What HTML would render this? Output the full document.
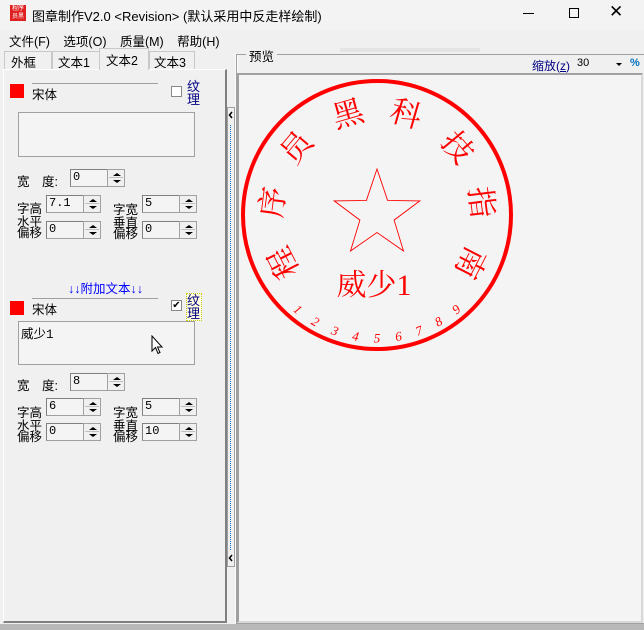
<!DOCTYPE html>
<html><head><meta charset="utf-8"><style>
*{margin:0;padding:0;box-sizing:border-box}
body{width:644px;height:630px;background:#f0f0f0;font-family:"Liberation Sans","Noto Sans CJK SC",sans-serif;font-size:12.5px;color:#000;position:relative;overflow:hidden}
.a{position:absolute}
.sunk{position:absolute;background:#f4f4f4;border:1px solid #a0a0a0;border-top-color:#808080;border-left-color:#808080;font-family:"Liberation Mono","Noto Sans CJK SC",monospace;font-size:12px;padding-left:2px;line-height:15px}
.spin{position:absolute;width:18px;border:1px solid #a0a0a0;background:#f0f0f0}
.spin i{position:absolute;left:5px;width:0;height:0;border-left:4px solid transparent;border-right:4px solid transparent}
.spin .u{top:3px;border-bottom:3px solid #000}
.spin .d{top:10px;border-top:3px solid #000}
.spin b{position:absolute;left:1px;right:1px;top:7px;height:1px;background:#c0c0c0}
.lbl2{position:absolute;font-size:12.5px;line-height:11px}
</style></head><body>
<div class="a" style="left:0;top:0;width:644px;height:30px;background:#f3f3f3"></div>
<div class="a" style="left:10px;top:5px;width:16px;height:16px;background:#e02020;color:#fff;font-size:6px;line-height:8px;text-align:center">程序<br>员黑</div>
<div class="a" style="left:32px;top:6px;font-size:13px">图章制作V2.0 &lt;Revision&gt; (默认采用中反走样绘制)</div>
<div class="a" style="left:523px;top:13px;width:11px;height:1px;background:#000"></div>
<div class="a" style="left:569px;top:8px;width:10px;height:10px;border:1px solid #000"></div>
<div class="a" style="left:609px;top:2px;font-size:17px">✕</div>
<div class="a" style="left:9px;top:31px;font-size:12.5px;word-spacing:10px">文件(F) 选项(O) 质量(M) 帮助(H)</div>
<div class="a" style="left:340px;top:48px;width:140px;height:4px;background:#e4e4e4"></div>
<div class="a" style="left:4px;top:51px;width:48px;height:18px;border:1px solid #c8c8c8;border-bottom:none;padding-left:6px;font-size:12.5px">外框</div>
<div class="a" style="left:52px;top:51px;width:48px;height:18px;border:1px solid #c8c8c8;border-bottom:none;padding-left:5px;font-size:12.5px">文本1</div>
<div class="a" style="left:99px;top:48px;width:50px;height:22px;border:1px solid #c8c8c8;border-bottom:none;background:#f0f0f0;padding-left:6px;padding-top:1px;font-size:12.5px;z-index:2">文本2</div>
<div class="a" style="left:149px;top:51px;width:46px;height:18px;border:1px solid #c8c8c8;border-bottom:none;padding-left:4px;font-size:12.5px">文本3</div>
<div class="a" style="left:3px;top:69px;width:224px;height:554px;border:1px solid #fff;border-right:2px solid #808080;border-bottom:2px solid #808080"></div>

<div class="a" style="left:10px;top:84px;width:14px;height:14px;background:#f00"></div>
<div class="a" style="left:32px;top:83px;width:126px;border-top:1px solid #a0a0a0;font-size:12.5px">宋体</div>
<div class="a" style="left:171px;top:86px;width:11px;height:11px;border:1px solid #888;background:#fff"></div>
<div class="a" style="left:187px;top:80px;color:#000080;font-size:13px;line-height:13px;width:14px">纹理</div>
<div class="a" style="left:18px;top:112px;width:177px;height:45px;border:1px solid #a0a0a0;background:#f4f4f4"></div>
<div class="a" style="left:17px;top:171px">宽　度:</div>
<div class="sunk" style="left:70px;top:169px;width:38px;height:18px">0</div>
<div class="spin" style="left:107px;top:169px;height:18px"><i class="u"></i><b></b><i class="d"></i></div>
<div class="a" style="left:17px;top:198px">字高</div>
<div class="sunk" style="left:46px;top:195px;width:38px;height:18px">7.1</div>
<div class="spin" style="left:83px;top:195px;height:18px"><i class="u"></i><b></b><i class="d"></i></div>
<div class="a" style="left:113px;top:199px">字宽</div>
<div class="sunk" style="left:142px;top:195px;width:38px;height:18px">5</div>
<div class="spin" style="left:179px;top:195px;height:18px"><i class="u"></i><b></b><i class="d"></i></div>
<div class="lbl2" style="left:17px;top:217px">水平<br>偏移</div>
<div class="sunk" style="left:46px;top:221px;width:38px;height:18px">0</div>
<div class="spin" style="left:83px;top:221px;height:18px"><i class="u"></i><b></b><i class="d"></i></div>
<div class="lbl2" style="left:113px;top:218px">垂直<br>偏移</div>
<div class="sunk" style="left:142px;top:221px;width:38px;height:18px">0</div>
<div class="spin" style="left:179px;top:221px;height:18px"><i class="u"></i><b></b><i class="d"></i></div>

<div class="a" style="left:68px;top:278px;color:#0000ff;font-size:12.5px">↓↓附加文本↓↓</div>
<div class="a" style="left:10px;top:301px;width:14px;height:14px;background:#f00"></div>
<div class="a" style="left:32px;top:298px;width:126px;border-top:1px solid #a0a0a0;font-size:12.5px">宋体</div>
<div class="a" style="left:171px;top:300px;width:11px;height:11px;border:1px solid #888;background:#fff;font-size:10px;line-height:9px;text-align:center">✔</div>
<div class="a" style="left:187px;top:294px;color:#000080;font-size:13px;line-height:13px;width:14px;outline:1px dotted #cc0;background:#ffffe0">纹理</div>
<div class="a" style="left:18px;top:321px;width:177px;height:44px;border:1px solid #a0a0a0;background:#f4f4f4;padding:1px 2px;font-family:'Liberation Mono','Noto Sans CJK SC',monospace">威少1</div>
<svg class="a" style="left:151px;top:335px" width="14" height="20"><path d="M1 1 L1 16 L4.5 12.5 L7 18.5 L9 17.5 L6.5 12 L11 12 Z" fill="#fff" stroke="#000"/></svg>
<div class="a" style="left:17px;top:375px">宽　度:</div>
<div class="sunk" style="left:70px;top:373px;width:38px;height:18px">8</div>
<div class="spin" style="left:107px;top:373px;height:18px"><i class="u"></i><b></b><i class="d"></i></div>
<div class="a" style="left:17px;top:402px">字高</div>
<div class="sunk" style="left:46px;top:398px;width:38px;height:18px">6</div>
<div class="spin" style="left:83px;top:398px;height:18px"><i class="u"></i><b></b><i class="d"></i></div>
<div class="a" style="left:113px;top:402px">字宽</div>
<div class="sunk" style="left:142px;top:398px;width:38px;height:18px">5</div>
<div class="spin" style="left:179px;top:398px;height:18px"><i class="u"></i><b></b><i class="d"></i></div>
<div class="lbl2" style="left:17px;top:421px">水平<br>偏移</div>
<div class="sunk" style="left:46px;top:423px;width:38px;height:18px">0</div>
<div class="spin" style="left:83px;top:423px;height:18px"><i class="u"></i><b></b><i class="d"></i></div>
<div class="lbl2" style="left:113px;top:421px">垂直<br>偏移</div>
<div class="sunk" style="left:142px;top:423px;width:38px;height:18px">10</div>
<div class="spin" style="left:179px;top:423px;height:18px"><i class="u"></i><b></b><i class="d"></i></div>

<div class="a" style="left:227px;top:107px;width:8px;height:460px;border:1px solid #a0a0a0;background:#f0f0f0"></div>
<div class="a" style="left:230px;top:125px;width:0;height:425px;border-left:1px dotted #1070d0"></div>
<svg class="a" style="left:228px;top:110px" width="6" height="10"><path d="M4 2 L1.5 5 L4 8" fill="none" stroke="#000" stroke-width="1.5"/></svg>
<svg class="a" style="left:228px;top:553px" width="6" height="10"><path d="M4 2 L1.5 5 L4 8" fill="none" stroke="#000" stroke-width="1.5"/></svg>
<div class="a" style="left:235px;top:54px;width:3px;height:570px;background:#fafafa"></div>

<div class="a" style="left:236px;top:54px;width:408px;height:570px;border:1px solid #a0a0a0;border-right:none"></div>
<div class="a" style="left:246px;top:46px;background:#f0f0f0;padding:0 3px;font-size:12.5px">预览</div>
<div class="a" style="left:532px;top:57px;color:#000080;font-size:12px">缩放(<u>z</u>)</div>
<div class="a" style="left:577px;top:57px;font-size:11px">30</div>
<div class="a" style="left:616px;top:63px;width:0;height:0;border-left:3px solid transparent;border-right:3px solid transparent;border-top:3px solid #000"></div>
<div class="a" style="left:630px;top:57px;color:#0070c0;font-size:11px;font-weight:bold">%</div>
<div class="a" style="left:237px;top:73px;width:406px;height:550px;border:2px solid #a0a0a0;border-right-color:#d8d8d8;border-bottom-color:#d8d8d8;background:#f4f4f4"></div>
<div class="a" style="left:0;top:624px;width:644px;height:6px;background:#b8b8b8"></div>

<svg class="a" style="left:0;top:0" width="644" height="630">
<g fill="#f00" font-family="'Liberation Serif','Noto Serif CJK SC',serif">
<circle cx="377" cy="215" r="134" fill="none" stroke="#f00" stroke-width="4"/>
<polygon fill="none" stroke="#f00" stroke-width="0.9" points="377,169 387.6,200.4 419.8,200.9 394.1,220.1 403.5,251 377,232.5 350.5,251 359.9,220.1 334.2,200.9 366.4,200.4"/>
<g font-size="31" text-anchor="middle" dominant-baseline="central">
<text transform="rotate(-117 377 215)" x="377" y="110">程</text>
<text transform="rotate(-83 377 215)" x="377" y="110">序</text>
<text transform="rotate(-50 377 215)" x="377" y="110">员</text>
<text transform="rotate(-16 377 215)" x="377" y="110">黑</text>
<text transform="rotate(16 377 215)" x="377" y="110">科</text>
<text transform="rotate(50 377 215)" x="377" y="110">技</text>
<text transform="rotate(83 377 215)" x="377" y="110">指</text>
<text transform="rotate(117 377 215)" x="377" y="110">南</text>
</g>
<text x="374" y="295" font-size="30" text-anchor="middle">威少1</text>
<g font-size="13" font-style="italic" text-anchor="middle" dominant-baseline="central">
<text transform="rotate(40 377 215)" x="377" y="338">1</text>
<text transform="rotate(30 377 215)" x="377" y="338">2</text>
<text transform="rotate(20 377 215)" x="377" y="338">3</text>
<text transform="rotate(10 377 215)" x="377" y="338">4</text>
<text x="377" y="338">5</text>
<text transform="rotate(-10 377 215)" x="377" y="338">6</text>
<text transform="rotate(-20 377 215)" x="377" y="338">7</text>
<text transform="rotate(-30 377 215)" x="377" y="338">8</text>
<text transform="rotate(-40 377 215)" x="377" y="338">9</text>
</g>
</g>
</svg>
</body></html>
